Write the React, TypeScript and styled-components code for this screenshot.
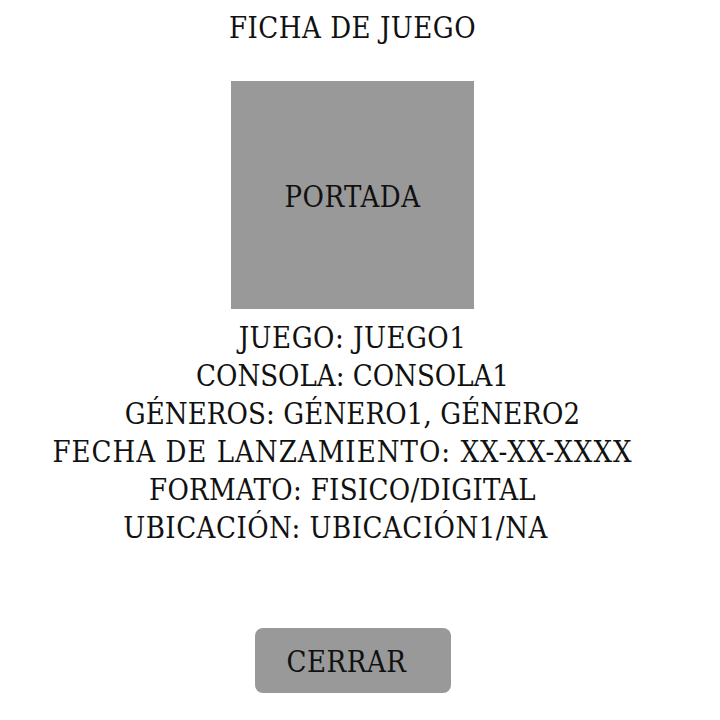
import React from 'react';
import styled, { createGlobalStyle } from 'styled-components';

const GlobalStyle = createGlobalStyle`
  html, body {
    margin: 0;
    padding: 0;
    background: #ffffff;
  }
  body {
    font-family: "DejaVu Serif Condensed", "DejaVu Serif", serif;
    color: #111;
  }
`;

const Page = styled.div`
  width: 705px;
  height: 720px;
  display: flex;
  flex-direction: column;
  align-items: center;
  box-sizing: border-box;
  padding-top: 11px;
`;

const Title = styled.h1`
  margin: 0;
  font-size: 29px;
  font-weight: normal;
  letter-spacing: 0.5px;
  line-height: 34px;
`;

const Cover = styled.div`
  width: 243px;
  height: 228px;
  margin-top: 36px;
  background-color: #999999;
  display: flex;
  align-items: center;
  justify-content: center;
  font-size: 29px;
  letter-spacing: 0.5px;
  padding-top: 4px;
  box-sizing: border-box;
`;

const InfoList = styled.div`
  margin-top: 10px;
  display: flex;
  flex-direction: column;
  align-items: center;
`;

const InfoLine = styled.div<{ $shift?: number; $spacing?: number }>`
  font-size: 29px;
  line-height: 38px;
  letter-spacing: ${(p) => p.$spacing ?? 0.5}px;
  white-space: nowrap;
  transform: translateX(${(p) => p.$shift ?? 0}px);
`;

const CloseButton = styled.button`
  margin-top: 81px;
  width: 196px;
  height: 65px;
  border: none;
  border-radius: 8px;
  background-color: #999999;
  font-family: inherit;
  font-size: 29px;
  letter-spacing: 0.5px;
  color: #111;
  padding: 2px 12px 0 0;
  cursor: pointer;
`;

const info = [
  { text: 'JUEGO: JUEGO1', shift: 0, spacing: 0.5 },
  { text: 'CONSOLA: CONSOLA1', shift: 0, spacing: 0 },
  { text: 'GÉNEROS: GÉNERO1, GÉNERO2', shift: 0, spacing: 0.1 },
  { text: 'FECHA DE LANZAMIENTO: XX-XX-XXXX', shift: -10, spacing: 1 },
  { text: 'FORMATO: FISICO/DIGITAL', shift: -10, spacing: 0.3 },
  { text: 'UBICACIÓN: UBICACIÓN1/NA', shift: -17, spacing: 0.5 },
];

const App: React.FC = () => {
  return (
    <>
      <GlobalStyle />
      <Page>
        <Title>FICHA DE JUEGO</Title>
        <Cover>PORTADA</Cover>
        <InfoList>
          {info.map((line, i) => (
            <InfoLine key={i} $shift={line.shift} $spacing={line.spacing}>
              {line.text}
            </InfoLine>
          ))}
        </InfoList>
        <CloseButton>CERRAR</CloseButton>
      </Page>
    </>
  );
};

export default App;
